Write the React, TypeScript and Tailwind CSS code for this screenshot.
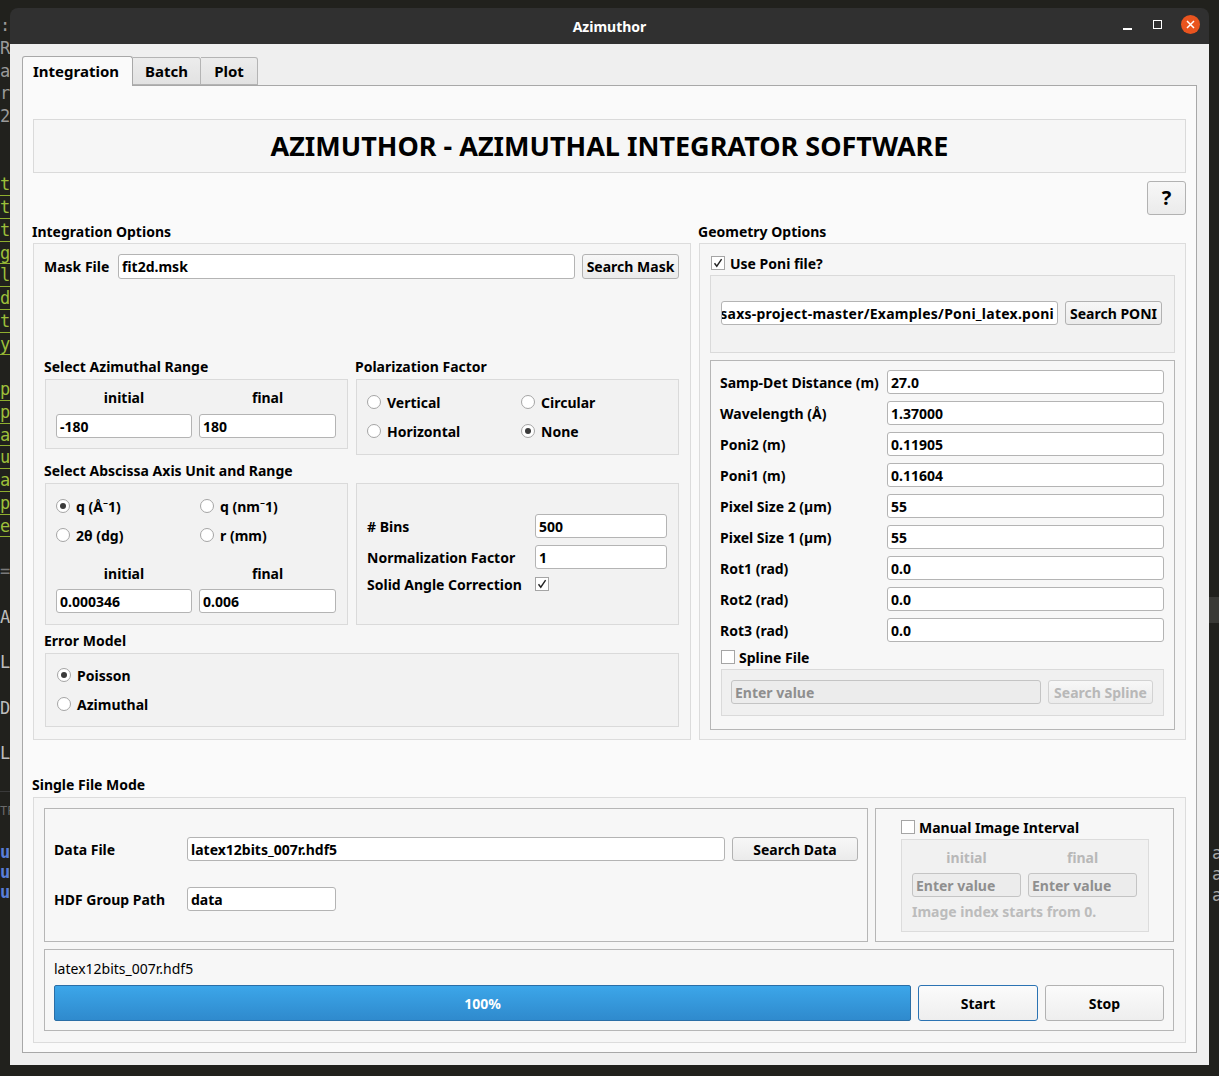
import React from "react";

const termLeft: [string, string, boolean?][] = [
  [":", "#9a9a9a"], ["R", "#9a9a9a"], ["a", "#9a9a9a"], ["r", "#9a9a9a"], ["2", "#9a9a9a"],
  ["", ""], ["", ""],
  ["t", "#9cbf3a", true], ["t", "#9cbf3a", true], ["t", "#9cbf3a", true], ["g", "#9cbf3a", true],
  ["l", "#9cbf3a", true], ["d", "#9cbf3a", true], ["t", "#9cbf3a", true], ["y", "#9cbf3a", true],
  ["", ""],
  ["p", "#9cbf3a", true], ["p", "#9cbf3a", true], ["a", "#9cbf3a", true], ["u", "#9cbf3a", true],
  ["a", "#9cbf3a", true], ["p", "#9cbf3a", true], ["e", "#9cbf3a", true],
  ["", ""], ["=", "#7a7a7a"], ["", ""], ["A", "#bdbdbd"], ["", ""], ["L", "#bdbdbd"], ["", ""],
  ["D", "#bdbdbd"], ["", ""], ["L", "#bdbdbd"],
];

function Input({ value, w, h = 24, disabled }: { value: string; w: number; h?: number; disabled?: boolean }) {
  return (
    <div
      style={{ width: w, height: h }}
      className={`shrink-0 flex items-center px-[3px] rounded-[3px] border text-[14px] font-bold whitespace-nowrap overflow-hidden ${
        disabled ? "bg-[#ececec] border-[#c4c4c4] text-[#8f8f8f]" : "bg-white border-[#b4b4b4] text-black"
      }`}
    >
      {value}
    </div>
  );
}

function Btn({ label, w, h = 24, disabled }: { label: string; w: number; h?: number; disabled?: boolean }) {
  return (
    <div
      style={{ width: w, height: h }}
      className={`shrink-0 flex items-center justify-center rounded-[3px] border bg-gradient-to-b from-[#f7f7f7] to-[#ebebeb] text-[14px] font-bold ${
        disabled ? "border-[#d2d2d2] text-[#b8b8b8]" : "border-[#b2b2b2] text-black"
      }`}
    >
      {label}
    </div>
  );
}

function Radio({ label, checked }: { label: string; checked?: boolean }) {
  return (
    <div className="flex items-center h-[20px]">
      <div className="w-[14px] h-[14px] rounded-full border border-[#a5a5a5] bg-white flex items-center justify-center">
        {checked && <div className="w-[6px] h-[6px] rounded-full bg-[#3a3a3a]" />}
      </div>
      <span className="ml-[6px] text-[14px] font-bold">{label}</span>
    </div>
  );
}

function Check({ checked }: { checked?: boolean }) {
  return (
    <div className="w-[14px] h-[14px] border border-[#a5a5a5] bg-white flex items-center justify-center">
      {checked && (
        <svg width="10" height="10" viewBox="0 0 10 10">
          <path d="M1.5 5.2 L3.8 8.2 L8.6 1.2" stroke="#222" strokeWidth="1.4" fill="none" />
        </svg>
      )}
    </div>
  );
}

function GroupLabel({ children, className = "" }: { children: React.ReactNode; className?: string }) {
  return <div className={`h-[20px] leading-[20px] text-[14px] font-bold ${className}`}>{children}</div>;
}

const geomRows: [string, string][] = [
  ["Samp-Det Distance (m)", "27.0"],
  ["Wavelength (Å)", "1.37000"],
  ["Poni2 (m)", "0.11905"],
  ["Poni1 (m)", "0.11604"],
  ["Pixel Size 2 (µm)", "55"],
  ["Pixel Size 1 (µm)", "55"],
  ["Rot1 (rad)", "0.0"],
  ["Rot2 (rad)", "0.0"],
  ["Rot3 (rad)", "0.0"],
];

export default function App() {
  return (
    <div className="w-[1219px] h-[1076px] bg-[#21211d] flex overflow-hidden font-['Noto_Sans','DejaVu_Sans',sans-serif] text-black">
      {/* terminal behind, left edge */}
      <div className="w-[10px] shrink-0 overflow-hidden pt-[14px] font-['DejaVu_Sans_Mono',monospace] text-[17px] leading-[22.75px]">
        {termLeft.map(([c, col, boxed], i) => (
          <div
            key={i}
            style={{ color: col }}
            className={`h-[22.75px] ${boxed ? "border-b border-[#8fae2f]" : ""}`}
          >
            {c || "\u00a0"}
          </div>
        ))}
        <div className="mt-[26px] text-[12px] text-[#6a6a6a] border-t border-[#3a3a3a] pt-[8px]">TP</div>
        <div className="mt-[19px] text-[#5a7fd8] font-bold leading-[20px]">
          <div>u</div>
          <div>u</div>
          <div>u</div>
        </div>
      </div>

      {/* window */}
      <div className="w-[1199px] shrink-0 mt-[8px] h-[1057px] flex flex-col rounded-t-[8px] overflow-hidden">
        <div className="h-[36px] bg-[#303030] flex items-center relative shrink-0">
          <div className="flex-1 text-center text-white text-[14px] font-bold">Azimuthor</div>
          <div className="absolute right-[9px] top-[7px] flex items-center">
            <div className="w-[9px] h-[2px] bg-white mt-[8px] mr-[21px]" />
            <div className="w-[9px] h-[9px] border-[1.5px] border-white mr-[19px]" />
            <div className="w-[19px] h-[19px] rounded-full bg-[#e9541f] flex items-center justify-center">
              <svg width="9" height="9" viewBox="0 0 9 9">
                <path d="M1 1 L8 8 M8 1 L1 8" stroke="white" strokeWidth="1.5" />
              </svg>
            </div>
          </div>
        </div>

        <div className="flex-1 bg-[#efefef] pl-[12px] pt-[12px]">
          {/* tabs */}
          <div className="flex items-end h-[29px]">
            <div className="w-[111px] h-[30px] bg-[#fafafa] border border-b-0 border-[#a8a8a8] rounded-t-[3px] flex items-center pl-[10px] text-[15px] font-bold relative z-10 -mb-[1px]">
              Integration
            </div>
            <div className="w-[68px] h-[28px] bg-gradient-to-b from-[#ececec] to-[#e2e2e2] border border-l-0 border-[#b4b4b4] rounded-tr-[3px] flex items-center justify-center text-[15px] font-bold">
              Batch
            </div>
            <div className="w-[57px] h-[28px] bg-gradient-to-b from-[#ececec] to-[#e2e2e2] border border-l-0 border-[#b4b4b4] rounded-tr-[3px] flex items-center justify-center text-[15px] font-bold">
              Plot
            </div>
          </div>

          {/* tab pane */}
          <div className="w-[1175px] h-[968px] bg-[#fafafa] border border-[#a8a8a8] px-[10px] pt-[33px]">
            <div className="w-[1153px] h-[54px] border border-[#dadada] bg-[#f6f6f6] flex items-center justify-center text-[27px] font-bold">
              AZIMUTHOR - AZIMUTHAL INTEGRATOR SOFTWARE
            </div>
            <div className="flex justify-end mt-[8px]">
              <div className="w-[39px] h-[34px] rounded-[3px] border border-[#b2b2b2] bg-gradient-to-b from-[#f7f7f7] to-[#ebebeb] flex items-center justify-center text-[20px] font-bold">
                ?
              </div>
            </div>

            <div className="flex gap-[8px] mt-[7px]">
              {/* Integration Options */}
              <div className="w-[658px]">
                <GroupLabel className="-ml-[1px]">Integration Options</GroupLabel>
                <div className="mt-[1px] h-[497px] border border-[#dcdcdc] bg-[#f6f6f6] pl-[10px] pr-[11px] pt-[10px]">
                  <div className="flex items-center h-[25px]">
                    <span className="w-[74px] text-[14px] font-bold">Mask File</span>
                    <Input value="fit2d.msk" w={457} h={25} />
                    <div className="ml-[7px]">
                      <Btn label="Search Mask" w={97} h={25} />
                    </div>
                  </div>

                  <div className="flex gap-[8px] mt-[78px] items-start">
                    <div className="w-[304px]">
                      <GroupLabel>Select Azimuthal Range</GroupLabel>
                      <div className="mt-[2px] ml-[1px] w-[303px] h-[70px] border border-[#dadada] bg-[#f2f2f2] px-[10px]">
                        <div className="flex gap-[7px] mt-[8px]">
                          <div className="w-[136px] text-center text-[14px] font-bold h-[20px] leading-[20px]">initial</div>
                          <div className="w-[137px] text-center text-[14px] font-bold h-[20px] leading-[20px]">final</div>
                        </div>
                        <div className="flex gap-[7px] mt-[6px]">
                          <Input value="-180" w={136} />
                          <Input value="180" w={137} />
                        </div>
                      </div>
                    </div>
                    <div className="w-[324px]">
                      <GroupLabel className="-ml-[1px]">Polarization Factor</GroupLabel>
                      <div className="mt-[2px] w-[323px] h-[76px] border border-[#dadada] bg-[#f2f2f2] pl-[10px] pt-[12px]">
                        <div className="grid grid-cols-[154px_1fr] gap-y-[9px]">
                          <Radio label="Vertical" />
                          <Radio label="Circular" />
                          <Radio label="Horizontal" />
                          <Radio label="None" checked />
                        </div>
                      </div>
                    </div>
                  </div>

                  <div className="flex gap-[8px] mt-[6px] items-start">
                    <div className="w-[304px]">
                      <GroupLabel>Select Abscissa Axis Unit and Range</GroupLabel>
                      <div className="mt-[2px] ml-[1px] w-[303px] h-[142px] border border-[#dadada] bg-[#f2f2f2] px-[10px] pt-[12px]">
                        <div className="grid grid-cols-[144px_1fr] gap-y-[9px]">
                          <Radio label="q (Å⁻1)" checked />
                          <Radio label="q (nm⁻1)" />
                          <Radio label="2θ (dg)" />
                          <Radio label="r (mm)" />
                        </div>
                        <div className="flex gap-[7px] mt-[19px]">
                          <div className="w-[136px] text-center text-[14px] font-bold h-[20px] leading-[20px]">initial</div>
                          <div className="w-[137px] text-center text-[14px] font-bold h-[20px] leading-[20px]">final</div>
                        </div>
                        <div className="flex gap-[7px] mt-[5px]">
                          <Input value="0.000346" w={136} />
                          <Input value="0.006" w={137} />
                        </div>
                      </div>
                    </div>
                    <div className="w-[324px] pt-[22px]">
                      <div className="w-[323px] h-[142px] border border-[#dadada] bg-[#f2f2f2] pl-[10px] pt-[30px]">
                        <div className="flex items-center h-[24px]">
                          <span className="w-[168px] text-[14px] font-bold">
                            # Bins
                          </span>
                          <Input value="500" w={132} />
                        </div>
                        <div className="flex items-center h-[24px] mt-[7px]">
                          <span className="w-[168px] text-[14px] font-bold">Normalization Factor</span>
                          <Input value="1" w={132} />
                        </div>
                        <div className="flex items-center h-[20px] mt-[5px]">
                          <span className="w-[168px] text-[14px] font-bold">Solid Angle Correction</span>
                          <Check checked />
                        </div>
                      </div>
                    </div>
                  </div>

                  <GroupLabel className="mt-[6px]">Error Model</GroupLabel>
                  <div className="mt-[2px] ml-[1px] w-[634px] h-[74px] border border-[#dadada] bg-[#f2f2f2] pl-[11px] pt-[11px] flex flex-col gap-[9px]">
                    <Radio label="Poisson" checked />
                    <Radio label="Azimuthal" />
                  </div>
                </div>
              </div>

              {/* Geometry Options */}
              <div className="w-[487px]">
                <GroupLabel className="-ml-[1px]">Geometry Options</GroupLabel>
                <div className="mt-[1px] h-[497px] border border-[#dcdcdc] bg-[#f6f6f6] pl-[10px] pt-[9px]">
                  <div className="flex items-center h-[20px] pl-[1px]">
                    <Check checked />
                    <span className="ml-[5px] text-[14px] font-bold">Use Poni file?</span>
                  </div>
                  <div className="mt-[2px] w-[465px] h-[78px] border border-[#dadada] bg-[#f2f2f2] pl-[10px] pt-[25px] flex gap-[7px]">
                    <div className="w-[337px] h-[24px] shrink-0 bg-white border border-[#b4b4b4] rounded-[3px] flex items-center justify-end pr-[3px] overflow-hidden text-[14px] font-bold whitespace-nowrap tracking-[0.25px]">
                      saxs-project-master/Examples/Poni_latex.poni
                    </div>
                    <Btn label="Search PONI" w={97} />
                  </div>
                  <div className="mt-[7px] w-[465px] h-[370px] border border-[#b6b6b6] bg-[#f7f7f7] pl-[9px] pt-[9px]">
                    <div className="flex flex-col gap-[7px]">
                      {geomRows.map(([l, v]) => (
                        <div key={l} className="flex items-center h-[24px]">
                          <span className="w-[167px] text-[14px] font-bold whitespace-nowrap">{l}</span>
                          <Input value={v} w={277} />
                        </div>
                      ))}
                    </div>
                    <div className="flex items-center h-[20px] mt-[5px] pl-[1px]">
                      <Check />
                      <span className="ml-[4px] text-[14px] font-bold">Spline File</span>
                    </div>
                    <div className="ml-[1px] mt-[2px] w-[443px] h-[47px] border border-[#dadada] bg-[#f0f0f0] pl-[9px] pt-[10px] flex gap-[7px]">
                      <Input value="Enter value" w={310} disabled />
                      <Btn label="Search Spline" w={105} disabled />
                    </div>
                  </div>
                </div>
              </div>
            </div>

            {/* Single File Mode */}
            <GroupLabel className="mt-[35px] -ml-[1px]">Single File Mode</GroupLabel>
            <div className="mt-[2px] w-[1153px] h-[246px] border border-[#dcdcdc] bg-[#f6f6f6] pl-[10px] pt-[10px]">
              <div className="flex gap-[7px]">
                <div className="w-[824px] h-[134px] border border-[#b6b6b6] bg-[#f7f7f7] pl-[9px] pt-[28px]">
                  <div className="flex items-center h-[24px]">
                    <span className="w-[133px] text-[14px] font-bold">Data File</span>
                    <Input value="latex12bits_007r.hdf5" w={538} />
                    <div className="ml-[7px]">
                      <Btn label="Search Data" w={126} />
                    </div>
                  </div>
                  <div className="flex items-center h-[24px] mt-[26px]">
                    <span className="w-[133px] text-[14px] font-bold">HDF Group Path</span>
                    <Input value="data" w={149} />
                  </div>
                </div>
                <div className="w-[299px] h-[134px] border border-[#b6b6b6] bg-[#f7f7f7] pl-[25px] pt-[8px]">
                  <div className="flex items-center h-[20px]">
                    <Check />
                    <span className="ml-[4px] text-[14px] font-bold">Manual Image Interval</span>
                  </div>
                  <div className="mt-[2px] w-[248px] h-[93px] border border-[#dcdcdc] bg-[#f1f1f1] pl-[10px]">
                    <div className="flex gap-[7px] mt-[8px] text-[#b8b8b8] text-[14px] font-bold">
                      <div className="w-[109px] text-center h-[20px] leading-[20px]">initial</div>
                      <div className="w-[109px] text-center h-[20px] leading-[20px]">final</div>
                    </div>
                    <div className="flex gap-[7px] mt-[5px]">
                      <Input value="Enter value" w={109} disabled />
                      <Input value="Enter value" w={109} disabled />
                    </div>
                    <div className="mt-[5px] text-[14px] font-bold text-[#bcbcbc] h-[20px] leading-[20px]">
                      Image index starts from 0.
                    </div>
                  </div>
                </div>
              </div>
              <div className="mt-[7px] w-[1130px] h-[82px] border border-[#b6b6b6] bg-[#f7f7f7] pl-[9px] pt-[9px]">
                <div className="h-[20px] leading-[20px] text-[14px]">latex12bits_007r.hdf5</div>
                <div className="flex gap-[7px] mt-[6px]">
                  <div className="w-[857px] h-[36px] rounded-[2px] border border-[#2a6ea6] bg-gradient-to-b from-[#3ca6e9] to-[#2f8acd] flex items-center justify-center text-white text-[14px] font-bold">
                    100%
                  </div>
                  <div className="w-[120px] h-[36px] rounded-[3px] border border-[#2b73b3] bg-gradient-to-b from-[#fbfbfb] to-[#eeeeee] flex items-center justify-center text-[14px] font-bold">
                    Start
                  </div>
                  <div className="w-[119px] h-[36px] rounded-[3px] border border-[#b2b2b2] bg-gradient-to-b from-[#fbfbfb] to-[#eeeeee] flex items-center justify-center text-[14px] font-bold">
                    Stop
                  </div>
                </div>
              </div>
            </div>
          </div>
        </div>
      </div>

      {/* terminal behind, right edge */}
      <div className="w-[10px] shrink-0 overflow-hidden pl-[3px] font-['DejaVu_Sans_Mono',monospace] text-[17px] text-[#a8a8a8]">
        <div className="h-[597px]" />
        <div className="h-[26px] -ml-[3px] bg-[#3a3a36]" />
        <div className="h-[220px]" />
        <div className="leading-[21px]">
          <div>a</div>
          <div>a</div>
          <div>a</div>
        </div>
      </div>
    </div>
  );
}
